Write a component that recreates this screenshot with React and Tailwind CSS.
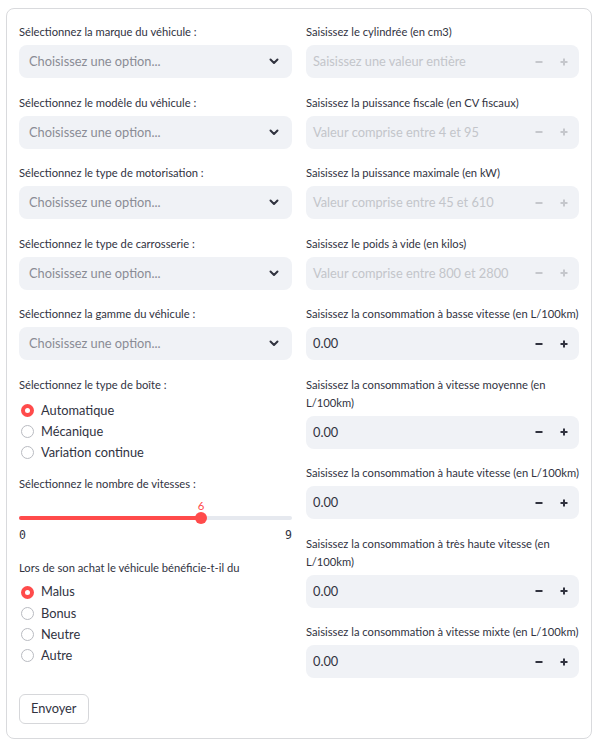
import React from 'react';

const selects = [
  'Sélectionnez la marque du véhicule :',
  'Sélectionnez le modèle du véhicule :',
  'Sélectionnez le type de motorisation :',
  'Sélectionnez le type de carrosserie :',
  'Sélectionnez la gamme du véhicule :',
];

const numbers = [
  { label: ['Saisissez le cylindrée (en cm3)'], placeholder: 'Saisissez une valeur entière', disabled: true },
  { label: ['Saisissez la puissance fiscale (en CV fiscaux)'], placeholder: 'Valeur comprise entre 4 et 95', disabled: true },
  { label: ['Saisissez la puissance maximale (en kW)'], placeholder: 'Valeur comprise entre 45 et 610', disabled: true },
  { label: ['Saisissez le poids à vide (en kilos)'], placeholder: 'Valeur comprise entre 800 et 2800', disabled: true },
  { label: ['Saisissez la consommation à basse vitesse (en L/100km)'], value: '0.00' },
  { label: ['Saisissez la consommation à vitesse moyenne (en', 'L/100km)'], value: '0.00' },
  { label: ['Saisissez la consommation à haute vitesse (en L/100km)'], value: '0.00' },
  { label: ['Saisissez la consommation à très haute vitesse (en', 'L/100km)'], value: '0.00' },
  { label: ['Saisissez la consommation à vitesse mixte (en L/100km)'], value: '0.00' },
];

function Label({ lines }) {
  return (
    <div className="text-[11.2px] leading-[18px] text-[#31333f] mb-1 whitespace-nowrap">
      {lines.map((l) => (
        <div key={l}>{l}</div>
      ))}
    </div>
  );
}

function SelectBox({ label }) {
  return (
    <div>
      <Label lines={[label]} />
      <div className="h-[33px] rounded-lg bg-[#f0f2f6] flex items-center justify-between pl-[10px] pr-[12px]">
        <span className="text-[12.8px] text-[#8a8c95] pt-[1px]">Choisissez une option...</span>
        <svg width="10" height="7" viewBox="0 0 10 7" className="mr-[1px]">
          <path d="M1.5 1.5 L5 5 L8.5 1.5" fill="none" stroke="#31333f" strokeWidth="2" strokeLinecap="round" strokeLinejoin="round" />
        </svg>
      </div>
    </div>
  );
}

function NumberInput({ label, placeholder, value, disabled }) {
  const c = disabled ? '#c5c7cc' : '#31333f';
  return (
    <div>
      <Label lines={label} />
      <div className="h-[33px] rounded-lg bg-[#f0f2f6] flex items-center pl-[7px]">
        <span className={`flex-1 text-[12.8px] pt-[1px] whitespace-nowrap ${disabled ? 'text-[#c3c5ca]' : 'text-[#31333f]'}`}>
          {disabled ? placeholder : value}
        </span>
        <div className="w-[25px] flex justify-center">
          <svg width="8" height="8" viewBox="0 0 8 8">
            <rect x="0.5" y="3" width="7" height="2" fill={c} />
          </svg>
        </div>
        <div className="w-[25px] flex justify-center mr-[3px]">
          <svg width="8" height="8" viewBox="0 0 8 8">
            <rect x="0.5" y="3" width="7" height="2" fill={c} />
            <rect x="3" y="0.5" width="2" height="7" fill={c} />
          </svg>
        </div>
      </div>
    </div>
  );
}

function Radio({ label, checked }) {
  return (
    <div className="h-[21.3px] flex items-center gap-[7px] pl-[2px]">
      {checked ? (
        <span className="w-[13px] h-[13px] rounded-full bg-[#ff4b4b] flex items-center justify-center">
          <span className="w-[5px] h-[5px] rounded-full bg-white" />
        </span>
      ) : (
        <span className="w-[13px] h-[13px] rounded-full border border-[#b9bbc1] bg-white" />
      )}
      <span className="text-[12.8px] text-[#31333f]">{label}</span>
    </div>
  );
}

export default function App() {
  return (
    <div className="w-[600px] h-[743px] bg-white pt-2" style={{ fontFamily: '"Lato", "Noto Sans", sans-serif' }}>
      <div className="ml-[6px] w-[586px] h-[731px] border border-[#d9dadd] rounded-lg px-3 pt-[14px]">
        <div className="grid grid-cols-2 gap-x-[14px]">
          <div className="flex flex-col">
            <div className="flex flex-col gap-[15.5px]">
              {selects.map((s) => (
                <SelectBox key={s} label={s} />
              ))}
            </div>
            <div className="mt-[15.5px]">
              <Label lines={['Sélectionnez le type de boîte :']} />
              <div className="mt-[6px]">
                <Radio label="Automatique" checked />
                <Radio label="Mécanique" />
                <Radio label="Variation continue" />
              </div>
            </div>
            <div className="mt-[12px]">
              <Label lines={['Sélectionnez le nombre de vitesses :']} />
              <div className="relative h-[48px]">
                <div className="absolute left-[182px] top-0 w-[0px] flex justify-center">
                  <span className="text-[11.4px] text-[#ff4b4b]">6</span>
                </div>
                <div className="absolute left-0 right-0 top-[19px] h-[4px] rounded-full bg-[#e6e9ef]" />
                <div className="absolute left-0 w-[182px] top-[19px] h-[4px] rounded-full bg-[#ff4b4b]" />
                <div className="absolute left-[176px] top-[15px] w-[12px] h-[12px] rounded-full bg-[#ff4b4b]" />
                <div className="absolute left-0 right-0 top-[30px] flex justify-between text-[11.5px] text-[#31333f]" style={{ fontFamily: '"DejaVu Sans Mono", monospace' }}>
                  <span>0</span>
                  <span>9</span>
                </div>
              </div>
            </div>
            <div className="mt-[14px]">
              <Label lines={['Lors de son achat le véhicule bénéficie-t-il du']} />
              <div className="mt-[4px]">
                <Radio label="Malus" checked />
                <Radio label="Bonus" />
                <Radio label="Neutre" />
                <Radio label="Autre" />
              </div>
            </div>
          </div>
          <div className="flex flex-col gap-[15.5px]">
            {numbers.map((n) => (
              <NumberInput key={n.label[0]} {...n} />
            ))}
          </div>
        </div>
        <button className="mt-4 h-[30px] px-[11px] rounded-md border border-[#d6d7da] bg-white text-[12.8px] text-[#31333f]">
          Envoyer
        </button>
      </div>
    </div>
  );
}
